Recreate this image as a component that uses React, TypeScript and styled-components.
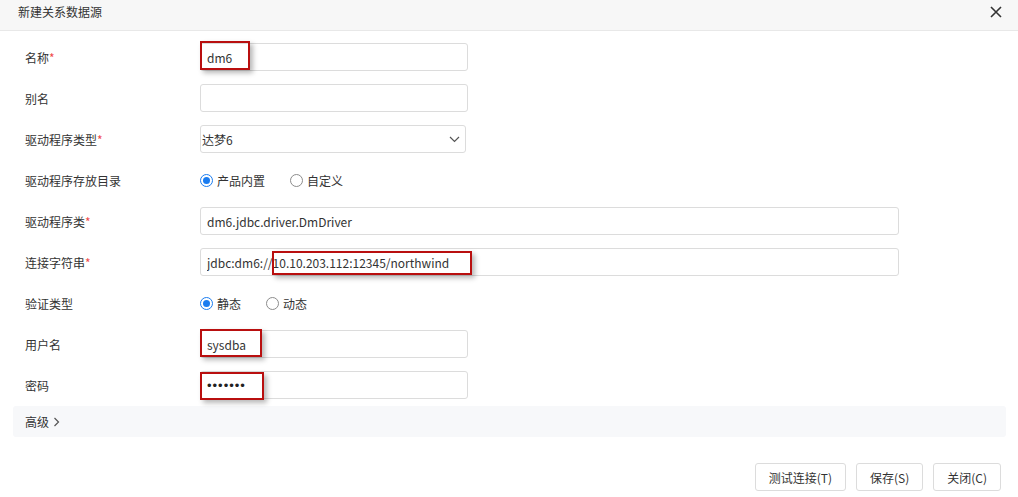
import React from "react";
import styled, { createGlobalStyle } from "styled-components";

const GlobalStyle = createGlobalStyle`
  html, body {
    margin: 0;
    padding: 0;
    background: #fff;
  }

  body {
    font-family: "Noto Sans CJK SC", "Noto Sans", sans-serif;
    font-size: 12px;
    color: #333;
  }
`;

const Dialog = styled.div`
  width: 1018px;
  height: 497px;
  display: flex;
  flex-direction: column;
  background: #fff;
  overflow: hidden;
`;

const Header = styled.div`
  height: 31px;
  flex-shrink: 0;
  box-sizing: border-box;
  padding: 3px 15px 0 18px;
  display: flex;
  align-items: flex-start;
  justify-content: space-between;
  background: #f7f7f7;
  border-bottom: 1px solid #e8e8e8;
`;

const Title = styled.span`
  line-height: 18px;
  color: #333;
`;

const CloseButton = styled.button`
  width: 14px;
  height: 14px;
  margin-top: 2px;
  padding: 0;
  border: none;
  background: none;
  display: flex;
  align-items: center;
  justify-content: center;
  cursor: pointer;
`;

const Form = styled.div`
  padding: 12px 0 0 25px;
  display: flex;
  flex-direction: column;
  gap: 13px;
`;

const Row = styled.div`
  height: 28px;
  display: flex;
  align-items: center;
`;

const Label = styled.div`
  width: 175px;
  flex-shrink: 0;
  color: #333;
`;

const Required = styled.span`
  color: #f04b4b;
`;

const Field = styled.div`
  position: relative;
  display: flex;
`;

const Input = styled.input<{ $width: number }>`
  width: ${({ $width }) => $width}px;
  height: 28px;
  box-sizing: border-box;
  padding: 0 6px;
  border: 1px solid #dcdcdc;
  border-radius: 3px;
  font-family: inherit;
  font-size: 12px;
  color: #333;
  background: #fff;
  outline: none;

  &[type="password"] {
    font-family: "Liberation Sans", Arial, sans-serif;
    font-size: 13px;
    letter-spacing: 1px;
    color: #222;
  }
`;

const Select = styled.div`
  width: 266px;
  height: 28px;
  box-sizing: border-box;
  padding: 0 5px 0 1px;
  border: 1px solid #dcdcdc;
  border-radius: 3px;
  display: flex;
  align-items: center;
  justify-content: space-between;
  color: #333;
`;

const RadioGroup = styled.div`
  display: flex;
  align-items: center;
`;

const RadioItem = styled.label`
  display: flex;
  align-items: center;
  margin-right: 25px;
  cursor: pointer;
`;

const RadioDot = styled.span<{ $checked: boolean }>`
  width: 13px;
  height: 13px;
  box-sizing: border-box;
  border-radius: 50%;
  border: 1px solid ${({ $checked }) => ($checked ? "#1a7cf0" : "#8c8c8c")};
  display: flex;
  align-items: center;
  justify-content: center;
  margin-right: 4px;

  &::after {
    content: "";
    width: 7px;
    height: 7px;
    border-radius: 50%;
    background: ${({ $checked }) => ($checked ? "#1a7cf0" : "transparent")};
  }
`;

const Mark = styled.div<{ $left: number; $top: number; $w: number; $h: number }>`
  position: absolute;
  left: ${({ $left }) => $left}px;
  top: ${({ $top }) => $top}px;
  width: ${({ $w }) => $w}px;
  height: ${({ $h }) => $h}px;
  box-sizing: border-box;
  border: 2px solid #b90f0f;
  box-shadow: 3px 3px 5px rgba(0, 0, 0, 0.28);
  pointer-events: none;
`;

const Advanced = styled.div`
  margin: 7px 12px 0 13px;
  height: 31px;
  padding-left: 12px;
  border-radius: 3px;
  background: #f7f8fa;
  display: flex;
  align-items: center;
  gap: 4px;
  color: #333;
`;

const Footer = styled.div`
  margin-top: 26px;
  padding-right: 17px;
  display: flex;
  justify-content: flex-end;
  gap: 10px;
`;

const Button = styled.button`
  height: 28px;
  padding: 0 13px;
  border: 1px solid #dcdcdc;
  border-radius: 3px;
  background: #fff;
  font-family: inherit;
  font-size: 12px;
  color: #333;
  cursor: pointer;
`;

type RadioOption = { label: string; checked: boolean };

function Radios({ options }: { options: RadioOption[] }) {
  return (
    <RadioGroup>
      {options.map((o) => (
        <RadioItem key={o.label}>
          <RadioDot $checked={o.checked} />
          {o.label}
        </RadioItem>
      ))}
    </RadioGroup>
  );
}

export default function App() {
  return (
    <>
      <GlobalStyle />
      <Dialog>
        <Header>
          <Title>新建关系数据源</Title>
          <CloseButton aria-label="关闭">
            <svg width="12" height="12" viewBox="0 0 12 12">
              <path d="M1 1L11 11M11 1L1 11" stroke="#333" strokeWidth="1.6" />
            </svg>
          </CloseButton>
        </Header>

        <Form>
          <Row>
            <Label>
              名称<Required>*</Required>
            </Label>
            <Field>
              <Input $width={268} defaultValue="dm6" />
              <Mark $left={0} $top={-2} $w={50} $h={29} />
            </Field>
          </Row>
          <Row>
            <Label>别名</Label>
            <Input $width={268} defaultValue="" />
          </Row>
          <Row>
            <Label>
              驱动程序类型<Required>*</Required>
            </Label>
            <Select>
              <span>达梦6</span>
              <svg width="11" height="7" viewBox="0 0 11 7">
                <path d="M1 1L5.5 5.5L10 1" fill="none" stroke="#555" strokeWidth="1.2" />
              </svg>
            </Select>
          </Row>
          <Row>
            <Label>驱动程序存放目录</Label>
            <Radios
              options={[
                { label: "产品内置", checked: true },
                { label: "自定义", checked: false },
              ]}
            />
          </Row>
          <Row>
            <Label>
              驱动程序类<Required>*</Required>
            </Label>
            <Input $width={699} defaultValue="dm6.jdbc.driver.DmDriver" />
          </Row>
          <Row>
            <Label>
              连接字符串<Required>*</Required>
            </Label>
            <Field>
              <Input $width={699} defaultValue="jdbc:dm6://10.10.203.112:12345/northwind" />
              <Mark $left={72} $top={3} $w={200} $h={24} />
            </Field>
          </Row>
          <Row>
            <Label>验证类型</Label>
            <Radios
              options={[
                { label: "静态", checked: true },
                { label: "动态", checked: false },
              ]}
            />
          </Row>
          <Row>
            <Label>用户名</Label>
            <Field>
              <Input $width={268} defaultValue="sysdba" />
              <Mark $left={0} $top={-1} $w={62} $h={28} />
            </Field>
          </Row>
          <Row>
            <Label>密码</Label>
            <Field>
              <Input $width={268} type="password" defaultValue="1234567" />
              <Mark $left={0} $top={1} $w={64} $h={28} />
            </Field>
          </Row>
        </Form>

        <Advanced>
          高级
          <svg width="7" height="10" viewBox="0 0 7 10">
            <path d="M1.5 1L5.5 5L1.5 9" fill="none" stroke="#555" strokeWidth="1.2" />
          </svg>
        </Advanced>

        <Footer>
          <Button>测试连接(T)</Button>
          <Button>保存(S)</Button>
          <Button>关闭(C)</Button>
        </Footer>
      </Dialog>
    </>
  );
}
